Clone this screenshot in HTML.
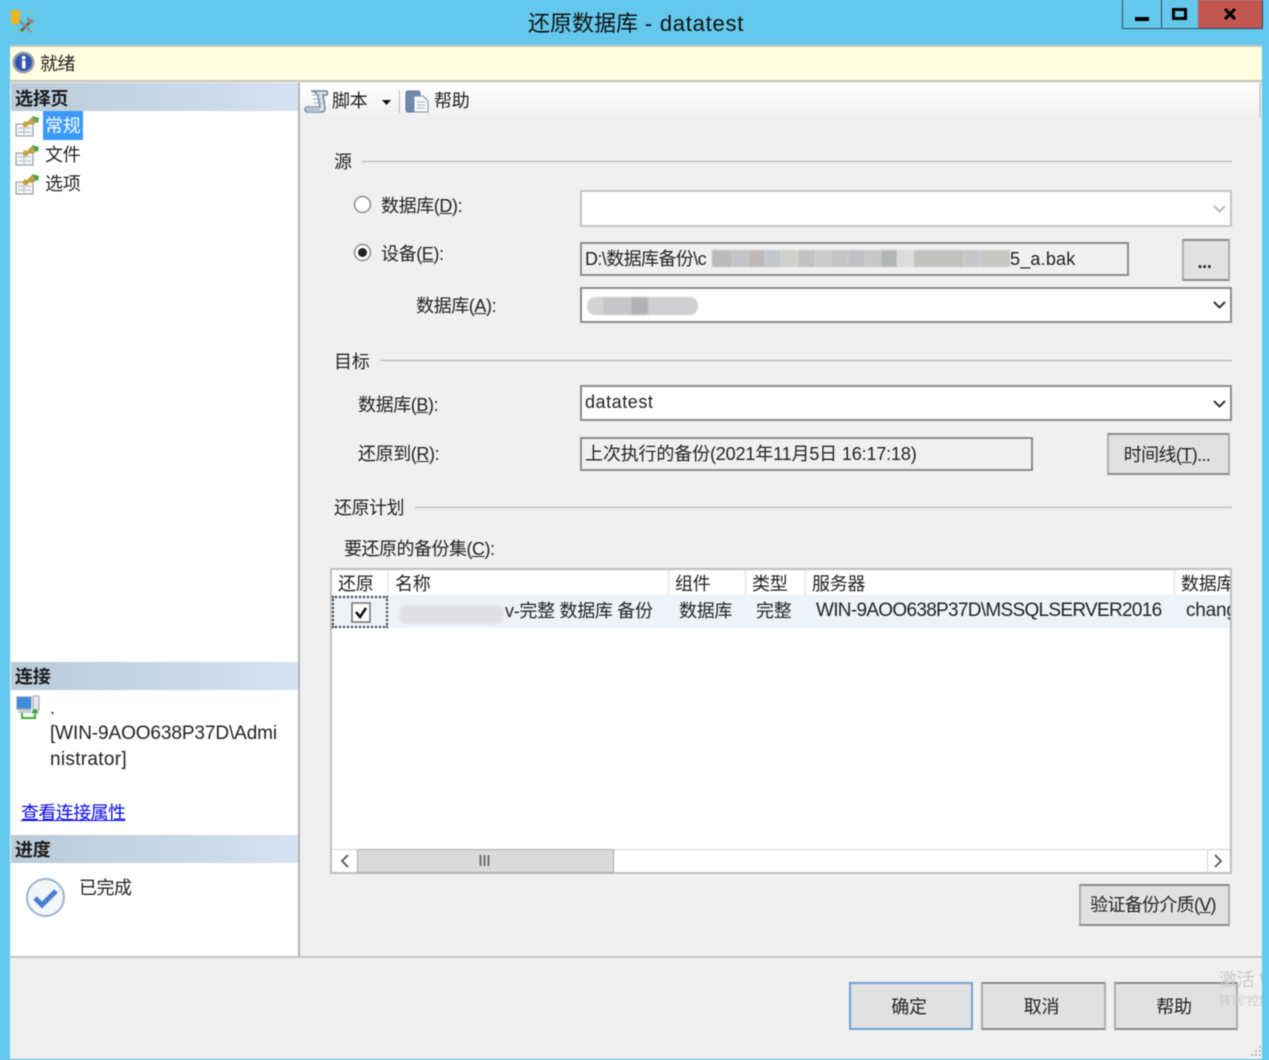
<!DOCTYPE html>
<html lang="zh-CN"><head><meta charset="utf-8"><title>还原数据库 - datatest</title>
<style>
html,body{margin:0;padding:0;width:1269px;height:1060px;overflow:hidden;background:#63c8eb}
#r{position:relative;width:1269px;height:1060px;overflow:hidden;filter:blur(.5px);font:18px/22px "Liberation Sans","Noto Sans CJK SC",sans-serif;color:#222;letter-spacing:-.3px}
#r div,#r svg,#r a{position:absolute}
.t{white-space:nowrap}
.u{text-decoration:underline}
.hd{left:11px;width:287px;height:28px;background:linear-gradient(90deg,#b9cad9,#d6e3f0)}
.hl{left:15px;font-weight:bold;color:#1a1a1a;white-space:nowrap}
.gl{height:1px;background:#a9a9a9}
.fld{background:#fff;border:2px solid #c4c4c4;box-sizing:border-box}
.dark{border-color:#8c8c8c}
.ro{background:#f0f0f0;border:2px solid #8c8c8c;box-sizing:border-box}
.btn{background:#e1e1e1;border:2px solid #adadad;border-bottom-color:#8a8a8a;border-top-color:#8a8a8a;box-sizing:border-box;text-align:center;color:#222}
.th{top:570px;height:25px;background:#fff}
.m{top:250px;height:17px;filter:blur(.6px)}
</style></head><body><div id="r">
<svg style="left:11px;top:9px" width="24" height="26" viewBox="0 0 24 26"><rect x="2" y="3" width="19" height="19" fill="none" stroke="#8fd96a" stroke-dasharray="2 2"/><rect x="0" y="1" width="9" height="14" rx="2" fill="#e9b422"/><path d="M10 22 21 11" stroke="#6d5a2e" stroke-width="2.5"/><path d="M9 12 20 23" stroke="#8a8f96" stroke-width="2.5"/><path d="M17 8 24 12 21 15 15 11Z" fill="#8a8f96"/></svg>
<div class="t" style="left:528px;top:11px;font-size:22px;line-height:26px;color:#111;letter-spacing:0">还原数据库<span style="letter-spacing:.75px"> - datatest</span></div>
<div style="left:1122px;top:0;width:141px;height:29px;border:1px solid #2c4a58;border-top:0;box-sizing:border-box"></div>
<div style="left:1161px;top:0;width:1px;height:29px;background:#2c4a58"></div>
<div style="left:1198px;top:0;width:65px;height:29px;background:#c2574f;border-right:1px solid #2c4a58;border-bottom:1px solid #2c4a58;box-sizing:border-box"></div>
<div style="left:1135px;top:17px;width:14px;height:4px;background:#000"></div>
<div style="left:1172px;top:8px;width:15px;height:12px;border:3px solid #000;box-sizing:border-box"></div>
<svg style="left:1224px;top:8px" width="12" height="12" viewBox="0 0 12 12"><path d="M1 1 11 11M11 1 1 11" stroke="#000" stroke-width="3"/></svg>

<div style="left:10px;top:45px;width:1252px;height:1014px;background:#f0f0f0"></div>
<div style="left:10px;top:45px;width:1252px;height:37px;background:#ffffe1;border-top:2px solid #c8c8c0;border-bottom:2px solid #c4c4bc;box-sizing:border-box"></div>
<svg style="left:12px;top:51px" width="23" height="23" viewBox="0 0 23 23"><circle cx="11.5" cy="11.5" r="11" fill="#9a9fa8"/><circle cx="11.5" cy="11.5" r="8.5" fill="#2f55b5"/><rect x="10" y="9.5" width="3.5" height="8" fill="#fff"/><circle cx="11.7" cy="6.7" r="1.9" fill="#fff"/></svg>
<div class="t" style="left:40px;top:53px;letter-spacing:-.6px">就绪</div>

<div style="left:11px;top:83px;width:287px;height:873px;background:#fff"></div>
<div style="left:298px;top:83px;width:2px;height:873px;background:#b4b4b4"></div>
<div class="hd" style="top:83px"></div><div class="hl" style="top:88px">选择页</div>
<div style="left:43px;top:111px;width:40px;height:29px;background:#3b9bfb"></div>
<div class="t" style="left:45px;top:115px;color:#fff">常规</div>
<div class="t" style="left:45px;top:144px">文件</div>
<div class="t" style="left:45px;top:173px">选项</div>
<svg style="left:15px;top:115px" width="24" height="22" viewBox="0 0 24 22"><rect x="1" y="9" width="17" height="12" fill="#f2f3f4" stroke="#8d949c"/><path d="M3 13H16M3 17H16M9 10V20" stroke="#b8c2cc"/><path d="M7 9 10 6 12 7 17 2 21 3 20 9 14 9 12 12 9 12Z" fill="#c4a23c"/><path d="M17 1 24 3 23 8 20 7Z" fill="#4f9f55"/></svg>
<svg style="left:15px;top:144px" width="24" height="22" viewBox="0 0 24 22"><rect x="1" y="9" width="17" height="12" fill="#f2f3f4" stroke="#8d949c"/><path d="M3 13H16M3 17H16M9 10V20" stroke="#b8c2cc"/><path d="M7 9 10 6 12 7 17 2 21 3 20 9 14 9 12 12 9 12Z" fill="#c4a23c"/><path d="M17 1 24 3 23 8 20 7Z" fill="#4f9f55"/></svg>
<svg style="left:15px;top:173px" width="24" height="22" viewBox="0 0 24 22"><rect x="1" y="9" width="17" height="12" fill="#f2f3f4" stroke="#8d949c"/><path d="M3 13H16M3 17H16M9 10V20" stroke="#b8c2cc"/><path d="M7 9 10 6 12 7 17 2 21 3 20 9 14 9 12 12 9 12Z" fill="#c4a23c"/><path d="M17 1 24 3 23 8 20 7Z" fill="#4f9f55"/></svg>

<div class="hd" style="top:662px"></div><div class="hl" style="top:666px">连接</div>
<svg style="left:16px;top:695px" width="26" height="25" viewBox="0 0 26 25"><rect x="1" y="2" width="14" height="12" fill="#3f8be0" stroke="#7d8fa3"/><rect x="2" y="14" width="13" height="4" fill="#c6ccd4"/><rect x="17" y="1" width="6" height="14" fill="#e4e8ec" stroke="#9aa4ae"/><path d="M6 18V23H19V16M16 18 19 15 22 18" fill="none" stroke="#3fa83f" stroke-width="2"/></svg>
<div class="t" style="left:50px;top:697px;letter-spacing:0">.</div>
<div class="t" style="left:50px;top:723px;font-size:19px;letter-spacing:-.1px">[WIN-9AOO638P37D\Admi</div>
<div class="t" style="left:50px;top:749px;font-size:19px;letter-spacing:.3px">nistrator]</div>
<a class="t" style="left:21px;top:802px;color:#0a0af0;text-decoration:underline;letter-spacing:-.6px">查看连接属性</a>
<div class="hd" style="top:835px"></div><div class="hl" style="top:839px">进度</div>
<svg style="left:25px;top:877px" width="41" height="41" viewBox="0 0 41 41"><circle cx="20.5" cy="20.5" r="18.5" fill="#f3f5f9" stroke="#9db4d2" stroke-width="2"/><path d="M10 21 17 28 31 14" fill="none" stroke="#4b7fd6" stroke-width="5"/></svg>
<div class="t" style="left:79px;top:877px;letter-spacing:-.5px">已完成</div>

<div style="left:300px;top:83px;width:960px;height:34px;background:linear-gradient(#fff,#f0f0f0)"></div>
<div style="left:1259px;top:83px;width:2px;height:35px;background:#cfcfcf"></div>
<svg style="left:304px;top:89px" width="25" height="25" viewBox="0 0 25 25"><path d="M7 2H22C24 2 24 6 22 6H19L21 19C21 21 20 23 18 23H3C1 23 0 19 3 18H16L14 7C13 4 10 2 7 2Z" fill="#dde5ee" stroke="#6f8298" stroke-width="1.5"/><path d="M8 6 H16M9 10H17M10 14H18" stroke="#9fb0c2"/><path d="M2 18H16V23H3Z" fill="#b4c2d2"/></svg>
<div class="t" style="left:332px;top:90px">脚本</div>
<svg style="left:382px;top:100px" width="9" height="5" viewBox="0 0 9 5"><path d="M0 0H9L4.500 5Z" fill="#111"/></svg>
<div style="left:399px;top:90px;width:1px;height:23px;background:#b5b5b5"></div>
<svg style="left:405px;top:89px" width="25" height="25" viewBox="0 0 25 25"><rect x="1" y="2" width="14" height="21" rx="2" fill="#6f88ad" stroke="#5d7390"/><path d="M9 7H18L23 12V23H9Z" fill="#f5f7fa" stroke="#7f8da0"/><path d="M12 13H20M12 16H20M12 19H20" stroke="#a9b6c6"/></svg>
<div class="t" style="left:434px;top:90px">帮助</div>

<div class="t" style="left:334px;top:151px">源</div><div class="gl" style="left:362px;top:161px;width:870px"></div>
<svg style="left:353px;top:195px" width="19" height="19" viewBox="0 0 19 19"><circle cx="9.500" cy="9.500" r="8" fill="#fff" stroke="#8c8c8c" stroke-width="1.500"/></svg>
<div class="t" style="left:381px;top:195px;letter-spacing:-.4px">数据库(<span class="u">D</span>):</div>
<div class="fld" style="left:580px;top:190px;width:652px;height:37px"></div>
<svg style="left:1213px;top:205px" width="13" height="8" viewBox="0 0 13 8"><path d="M1 1 6.500 6.500 12 1" fill="none" stroke="#b9b9b9" stroke-width="2"/></svg>
<svg style="left:353px;top:243px" width="19" height="19" viewBox="0 0 19 19"><circle cx="9.500" cy="9.500" r="8" fill="#fff" stroke="#8c8c8c" stroke-width="1.500"/><circle cx="9.500" cy="9.500" r="4.500" fill="#222"/></svg>
<div class="t" style="left:381px;top:243px;letter-spacing:-.4px">设备(<span class="u">E</span>):</div>
<div class="ro" style="left:580px;top:242px;width:549px;height:34px"></div>
<div class="t" style="left:585px;top:248px;letter-spacing:-.6px">D:\数据库备份\c</div>
<div class="m" style="left:712px;width:20px;background:#bdb9bc"></div>
<div class="m" style="left:732px;width:16px;background:#c3c3c5"></div>
<div class="m" style="left:748px;width:17px;background:#bdbab8"></div>
<div class="m" style="left:765px;width:16px;background:#c2c8cc"></div>
<div class="m" style="left:781px;width:17px;background:#d0cfcc"></div>
<div class="m" style="left:798px;width:17px;background:#c2c2c2"></div>
<div class="m" style="left:815px;width:16px;background:#cbcbcb"></div>
<div class="m" style="left:831px;width:17px;background:#c4c4c4"></div>
<div class="m" style="left:848px;width:17px;background:#c0bfc3"></div>
<div class="m" style="left:865px;width:16px;background:#c8c8c8"></div>
<div class="m" style="left:881px;width:16px;background:#b3b5b7"></div>
<div class="m" style="left:897px;width:17px;background:#dcdcda"></div>
<div class="m" style="left:914px;width:50px;background:#c2c2c0"></div>
<div class="m" style="left:964px;width:16px;background:#c5c7ca"></div>
<div class="m" style="left:980px;width:30px;background:#c8c8c5"></div>
<div class="t" style="left:1010px;top:248px;letter-spacing:.2px">5_a.bak</div>
<div class="btn" style="left:1182px;top:239px;width:48px;height:42px;line-height:42px;font-weight:bold;padding-right:3px">...</div>
<div class="t" style="left:416px;top:295px;letter-spacing:-.4px">数据库(<span class="u">A</span>):</div>
<div class="fld dark" style="left:580px;top:287px;width:652px;height:36px"></div>
<div style="left:587px;top:297px;width:111px;height:18px;border-radius:8px;background:linear-gradient(90deg,#d5d2d3 0,#d5d2d3 15%,#c6c6c8 15%,#c6c6c8 40%,#b2b2b6 40%,#b2b2b6 55%,#cfcfd1 55%,#cfcfd1 100%);filter:blur(.8px)"></div>
<svg style="left:1213px;top:301px" width="13" height="8" viewBox="0 0 13 8"><path d="M1 1 6.500 6.500 12 1" fill="none" stroke="#333" stroke-width="2"/></svg>

<div class="t" style="left:334px;top:351px">目标</div><div class="gl" style="left:380px;top:360px;width:852px"></div>
<div class="t" style="left:358px;top:394px;letter-spacing:-.4px">数据库(<span class="u">B</span>):</div>
<div class="fld dark" style="left:580px;top:385px;width:652px;height:36px"></div>
<div class="t" style="left:585px;top:391px;letter-spacing:.55px">datatest</div>
<svg style="left:1213px;top:400px" width="13" height="8" viewBox="0 0 13 8"><path d="M1 1 6.500 6.500 12 1" fill="none" stroke="#333" stroke-width="2"/></svg>
<div class="t" style="left:358px;top:443px;letter-spacing:-.4px">还原到(<span class="u">R</span>):</div>
<div class="ro" style="left:580px;top:437px;width:453px;height:34px"></div>
<div class="t" style="left:585px;top:443px;letter-spacing:-.15px">上次执行的备份(2021年11月5日 16:17:18)</div>
<div class="btn" style="left:1107px;top:433px;width:123px;height:42px;line-height:40px;letter-spacing:-.6px;padding-right:3px">时间线(<span class="u">T</span>)...</div>

<div class="t" style="left:334px;top:497px;letter-spacing:-.5px">还原计划</div><div class="gl" style="left:415px;top:507px;width:817px"></div>
<div class="t" style="left:344px;top:538px;letter-spacing:-.5px">要还原的备份集(<span class="u">C</span>):</div>

<div style="left:330px;top:568px;width:902px;height:306px;background:#fff;border:2px solid #bdbdbd;box-sizing:border-box"></div>
<div style="left:332px;top:570px;width:898px;height:25px;background:#f0f0f0"></div>
<div class="th" style="left:332px;width:55px"></div>
<div class="th" style="left:389px;width:278px"></div>
<div class="th" style="left:670px;width:74px"></div>
<div class="th" style="left:747px;width:57px"></div>
<div class="th" style="left:807px;width:366px"></div>
<div class="th" style="left:1176px;width:54px"></div>
<div class="t" style="left:338px;top:573px">还原</div>
<div class="t" style="left:395px;top:573px">名称</div>
<div class="t" style="left:675px;top:573px">组件</div>
<div class="t" style="left:752px;top:573px">类型</div>
<div class="t" style="left:812px;top:573px">服务器</div>
<div class="t" style="left:1181px;top:573px;width:49px;overflow:hidden">数据库</div>
<div style="left:332px;top:595px;width:898px;height:33px;background:#eef3f8"></div>
<div style="left:332px;top:596px;width:56px;height:32px;border:2px dotted #333;box-sizing:border-box"></div>
<svg style="left:351px;top:602px" width="20" height="21" viewBox="0 0 20 21"><rect x="1" y="1" width="18" height="19" fill="#fff" stroke="#707070" stroke-width="1.500"/><path d="M5 10 9 15 15 6" fill="none" stroke="#111" stroke-width="2.500"/></svg>
<div style="left:399px;top:605px;width:105px;height:19px;border-radius:8px;background:#e0e0e3;filter:blur(1.5px)"></div>
<div class="t" style="left:505px;top:600px">v-完整 数据库 备份</div>
<div class="t" style="left:679px;top:600px">数据库</div>
<div class="t" style="left:756px;top:600px">完整</div>
<div class="t" style="left:816px;top:600px;font-size:19px;letter-spacing:-.7px">WIN-9AOO638P37D\MSSQLSERVER2016</div>
<div class="t" style="left:1186px;top:600px;width:44px;overflow:hidden;font-size:19px;letter-spacing:-.2px">chang</div>

<div style="left:332px;top:849px;width:898px;height:23px;background:#fff;border-top:1px solid #d5d5d5;box-sizing:border-box"></div>
<div style="left:357px;top:849px;width:257px;height:24px;background:#dadada;border:1px solid #ababab;box-sizing:border-box"></div>
<svg style="left:339px;top:854px" width="12" height="14" viewBox="0 0 12 14"><path d="M9 1 3 7 9 13" fill="none" stroke="#555" stroke-width="1.800"/></svg>
<svg style="left:1212px;top:854px" width="12" height="14" viewBox="0 0 12 14"><path d="M3 1 9 7 3 13" fill="none" stroke="#555" stroke-width="1.800"/></svg>
<div style="left:1207px;top:850px;width:1px;height:22px;background:#d5d5d5"></div>
<svg style="left:479px;top:855px" width="12" height="11" viewBox="0 0 12 11"><path d="M1.500 0V11M5.500 0V11M9.500 0V11" stroke="#666" stroke-width="1.800"/></svg>

<div class="btn" style="left:1079px;top:884px;width:151px;height:42px;line-height:38px;letter-spacing:-.7px;padding-right:3px">验证备份介质(<span class="u">V</span>)</div>
<div style="left:10px;top:956px;width:1252px;height:2px;background:#c8c8c8"></div>
<div class="btn" style="left:849px;top:982px;width:124px;height:48px;line-height:46px;border-color:#6ea3d2;padding-right:4px">确定</div>
<div class="btn" style="left:981px;top:982px;width:125px;height:48px;line-height:46px;padding-right:4px">取消</div>
<div class="btn" style="left:1114px;top:982px;width:124px;height:48px;line-height:46px;padding-right:4px">帮助</div>
<div class="t" style="left:1219px;top:969px;width:43px;overflow:hidden;color:#c9c9c9">激活 W</div>
<div class="t" style="left:1219px;top:990px;width:43px;overflow:hidden;color:#c9c9c9;font-size:12px;letter-spacing:0">转到"控制</div>
<svg style="left:1248px;top:1044px" width="14" height="14" viewBox="0 0 14 14"><path d="M11 2h2v2h-2zM7 6h2v2H7zM11 6h2v2h-2zM3 10h2v2H3zM7 10h2v2H7zM11 10h2v2h-2z" fill="#b5b5b5"/></svg>
</div></body></html>
